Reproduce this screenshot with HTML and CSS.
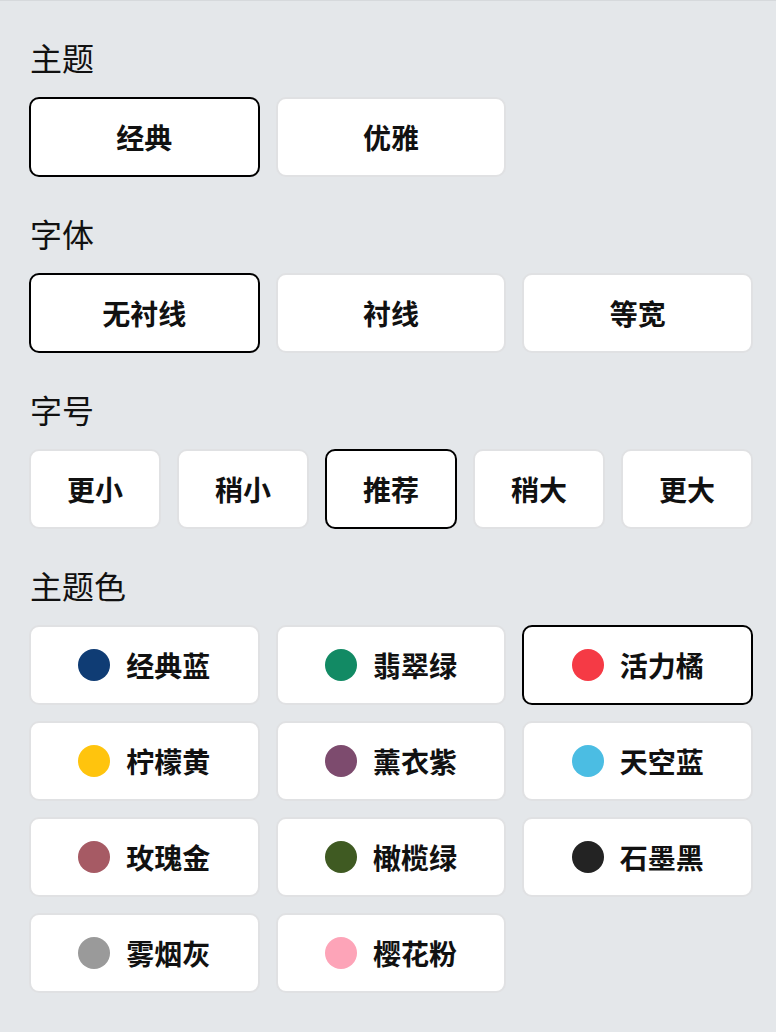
FILE: index.html
```html
<!DOCTYPE html>
<html lang="zh">
<head>
<meta charset="utf-8">
<link rel="stylesheet" href="styles.css">
</head>
<body>
<div class="panel">
  <section class="section">
    <h2 class="title">主题</h2>
    <div class="grid cols3">
      <button class="opt selected">经典</button>
      <button class="opt">优雅</button>
    </div>
  </section>
  <section class="section">
    <h2 class="title">字体</h2>
    <div class="grid cols3">
      <button class="opt selected">无衬线</button>
      <button class="opt">衬线</button>
      <button class="opt">等宽</button>
    </div>
  </section>
  <section class="section">
    <h2 class="title">字号</h2>
    <div class="grid cols5">
      <button class="opt">更小</button>
      <button class="opt">稍小</button>
      <button class="opt selected">推荐</button>
      <button class="opt">稍大</button>
      <button class="opt">更大</button>
    </div>
  </section>
  <section class="section">
    <h2 class="title">主题色</h2>
    <div class="grid cols3">
      <button class="opt"><span class="dot c-blue"></span>经典蓝</button>
      <button class="opt"><span class="dot c-green"></span>翡翠绿</button>
      <button class="opt selected"><span class="dot c-orange"></span>活力橘</button>
      <button class="opt"><span class="dot c-yellow"></span>柠檬黄</button>
      <button class="opt"><span class="dot c-purple"></span>薰衣紫</button>
      <button class="opt"><span class="dot c-sky"></span>天空蓝</button>
      <button class="opt"><span class="dot c-rose"></span>玫瑰金</button>
      <button class="opt"><span class="dot c-olive"></span>橄榄绿</button>
      <button class="opt"><span class="dot c-black"></span>石墨黑</button>
      <button class="opt"><span class="dot c-gray"></span>雾烟灰</button>
      <button class="opt"><span class="dot c-pink"></span>樱花粉</button>
    </div>
  </section>
</div>
</body>
</html>
```

FILE: styles.css
```css
* { box-sizing: border-box; }
html, body {
  margin: 0;
  padding: 0;
  background: #e4e7ea;
}
body {
  font-family: "Noto Sans CJK SC", "Noto Sans", sans-serif;
  color: #111;
}
.panel {
  border-top: 1px solid #d6d9dc;
  width: 776px;
  height: 1032px;
  padding: 36px 23px 0 29px;
}
.section {
  margin-bottom: 36px;
}
.title {
  margin: 0 0 20px 1px;
  font-size: 32px;
  font-weight: 400;
  line-height: 40px;
  height: 40px;
}
.grid {
  display: grid;
  gap: 16px;
}
.cols3 { grid-template-columns: repeat(3, 1fr); }
.cols5 { grid-template-columns: repeat(5, 1fr); }
.opt {
  height: 80px;
  background: #fff;
  border: 2px solid #e0e1e3;
  border-radius: 10px;
  font-family: inherit;
  font-size: 28px;
  font-weight: 700;
  color: #111;
  display: flex;
  align-items: center;
  justify-content: center;
  gap: 16px;
  padding: 0;
}
.opt.selected {
  border-color: #000;
}
.dot {
  width: 32px;
  height: 32px;
  border-radius: 50%;
  flex: none;
}
.c-blue { background: #0f3c74; }
.c-green { background: #128a64; }
.c-orange { background: #f53a45; }
.c-yellow { background: #ffc40d; }
.c-purple { background: #7d4b6e; }
.c-sky { background: #4bbde3; }
.c-rose { background: #a65a64; }
.c-olive { background: #3f5a22; }
.c-black { background: #232323; }
.c-gray { background: #9a9a9a; }
.c-pink { background: #fda4b8; }
```
